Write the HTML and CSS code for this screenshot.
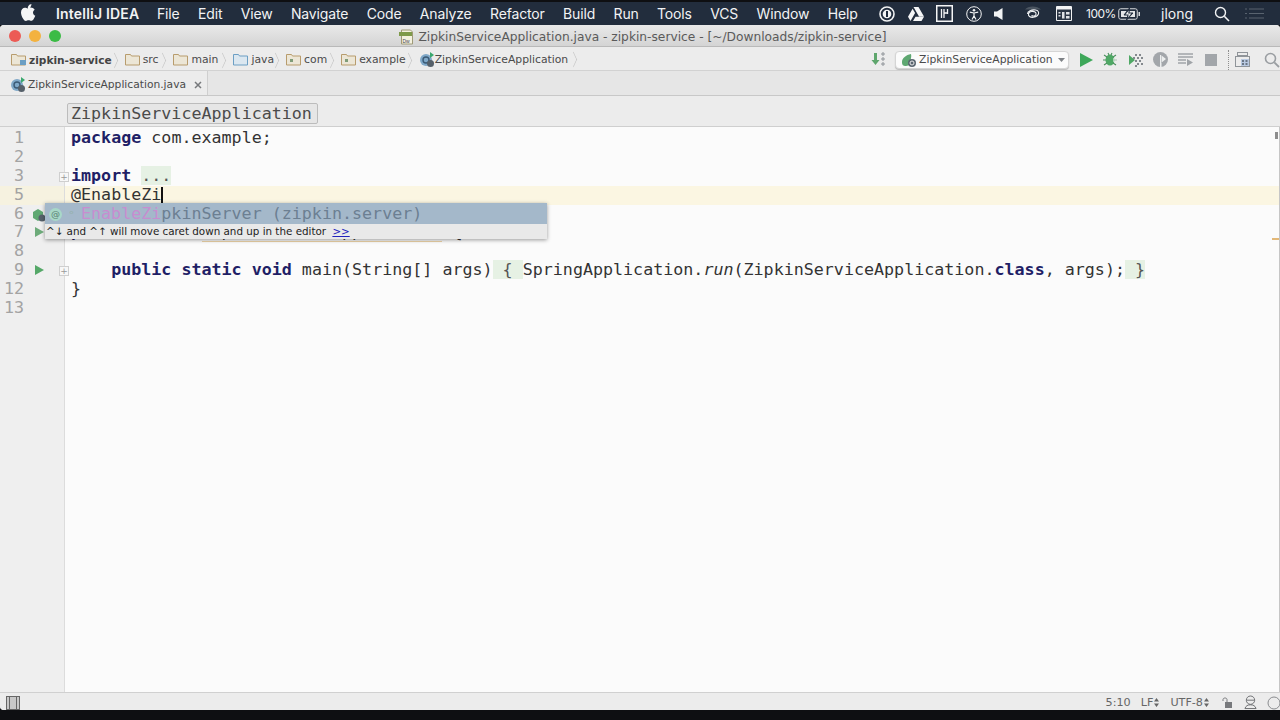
FILE: index.html
```html
<!DOCTYPE html>
<html lang="en">
<head>
<meta charset="utf-8">
<title>IntelliJ IDEA</title>
<link rel="stylesheet" href="styles.css">
</head>
<body>
<div class="desktop">
  <header class="menubar">
    <svg class="apple" width="15" height="17" viewBox="0 0 15 17"><path fill="#f4f5f6" d="M10.400 0c.1 1.100-.3 2.100-.9 2.900-.7.800-1.700 1.400-2.700 1.300-.1-1 .4-2.100 1-2.800C8.400.600 9.500.100 10.400 0zM13.700 5.700c-1 .700-1.700 1.600-1.700 2.900 0 1.500.9 2.600 2.300 3.200-.4 1.100-.9 2.100-1.600 3.100-.7 1-1.400 1.900-2.500 1.900s-1.400-.6-2.600-.6-1.700.6-2.700.7c-1.100 0-1.900-1-2.600-2C.900 12.800 0 10.400 0 8.400c0-3 2-4.700 3.900-4.700 1.100 0 2 .7 2.700.7.700 0 1.800-.8 3-.8 1.700 0 3.100.7 4.100 2.100z"/></svg>
    <strong class="app">IntelliJ IDEA</strong>
    <nav class="menus">
      <span>File</span><span>Edit</span><span>View</span><span>Navigate</span><span>Code</span><span>Analyze</span><span>Refactor</span><span>Build</span><span>Run</span><span>Tools</span><span>VCS</span><span>Window</span><span>Help</span>
    </nav>
    <div class="status-icons">
      <svg class="si m13" width="16" height="16" viewBox="0 0 16 16"><circle cx="8" cy="8" r="7" fill="none" stroke="#f2f3f4" stroke-width="1.600"/><circle cx="8" cy="8" r="4.300" fill="#f2f3f4"/><rect x="7" y="5" width="2" height="6" fill="#1f2b3c"/></svg>
      <svg class="si m12" width="16" height="14" viewBox="0 0 16 14"><path fill="#f4f5f6" d="M5.500 0h5l5.500 9.500h-5zM4.600 1.700 7.100 6 2.500 14 0 9.700zM5 14l2.500-4.300H16L13.500 14z"/></svg>
      <svg class="si m13" width="17" height="17" viewBox="0 0 17 17"><rect x=".75" y=".75" width="15.500" height="15.500" fill="none" stroke="#f4f5f6" stroke-width="1.500"/><path d="M5.500 4v9M8 4v9M11.500 4v5M8 8h3.500" stroke="#f4f5f6" stroke-width="1.300" fill="none"/></svg>
      <svg class="si m12" width="16" height="16" viewBox="0 0 16 16"><circle cx="8" cy="8" r="7.300" fill="none" stroke="#f2f3f4" stroke-width="1"/><circle cx="8" cy="4.300" r="1.300" fill="#f2f3f4"/><path d="M3.800 6.200 8 7l4.200-.8M8 7v3M8 10l-2 3.500M8 10l2 3.500" fill="none" stroke="#f2f3f4" stroke-width="1.200"/></svg>
      <svg class="si m21" width="9" height="12" viewBox="0 0 9 12"><path fill="#f2f3f4" d="M0 3.500h3L8.500 0v12L3 8.500H0z"/></svg>
      <svg class="si m14" width="18" height="16" viewBox="0 0 18 16"><path d="M1 3.500c3-4 12-4 16 0z" fill="#4b5561"/><path d="M3.500 8c0-3 4-4.500 8-4 3.500.5 4 3.500 2 5.500s-6 2.500-8 1-1-4.500 2-5 5 1 4.500 2.800-3 2.200-4.500 1.200" fill="none" stroke="#eef0f2" stroke-width="1.100"/></svg>
      <svg class="si m14" width="16" height="15" viewBox="0 0 16 15"><rect width="16" height="15" rx="1" fill="#f2f3f4"/><rect x="1" y="3.500" width="14" height="10.500" fill="#2a3544"/><path d="M2.500 6h2v1.500h-2zM2.500 9h2v1.500h-2zM6 6h2.500v6.500H6zM10 6h3.500v2.500H10zM10 10h3.500v2.500H10z" fill="#dfe2e5"/></svg>
      <span class="battery-text">100%</span>
      <svg class="si battery" width="23" height="14" viewBox="0 0 23 14"><rect x=".75" y="1.750" width="18.500" height="10.500" rx="2" fill="none" stroke="#d8dbde" stroke-width="1"/><rect x="20.500" y="5" width="1.500" height="4" fill="#d8dbde"/><path d="M3 4h14v6H3z" fill="#e4e6e8"/><path d="M11.500 1 6 8h4l-1.500 5L15 6h-4z" fill="#243041" stroke="#243041"/><path d="M10.800 3.500 7.500 7.500h3.200l-.7 3 3.300-4h-3.200z" fill="#f2f3f4"/></svg>
      <span class="user">jlong</span>
      <svg class="si m15" width="16" height="16" viewBox="0 0 16 16"><circle cx="6.500" cy="6.500" r="5" fill="none" stroke="#f2f3f4" stroke-width="1.400"/><path d="M10.300 10.300 15 15" stroke="#f2f3f4" stroke-width="1.600"/></svg>
      <svg class="si" width="19" height="11" viewBox="0 0 19 11"><path d="M0 1h2M4 1h15M0 5.500h2M4 5.500h15M0 10h2M4 10h15" stroke="#59636f" stroke-width="1"/></svg>
    </div>
  </header>

  <div class="window">
    <div class="titlebar">
      <div class="lights"><i class="red"></i><i class="yellow"></i><i class="green"></i></div>
      <div class="title">
        <svg width="16" height="16" viewBox="0 0 16 16"><path d="M3.500 1h9l2 2v12h-11z" fill="#f4f1df" stroke="#9f9a78"/><rect x="1" y="3" width="13" height="4" fill="#7f9a4a"/><text class="dw" x="4.500" y="13.500">Dw</text></svg>
        <span>ZipkinServiceApplication.java - zipkin-service - [~/Downloads/zipkin-service]</span>
      </div>
    </div>

    <div class="navbar">
      <ol class="crumbs">
        <li class="root"><svg width="15" height="13" viewBox="0 0 15 13"><path d="M.5 1.500h5l1 1.500h8v9H.5z" fill="#ece6d6" stroke="#b89c6d"/><rect x="9" y="7" width="6" height="5" fill="#6c9fc4"/></svg><b>zipkin-service</b></li>
        <li><svg width="15" height="13" viewBox="0 0 15 13"><path d="M.5 1.500h5l1 1.500h8v9H.5z" fill="#ece6d6" stroke="#b89c6d"/></svg>src</li>
        <li><svg width="15" height="13" viewBox="0 0 15 13"><path d="M.5 1.500h5l1 1.500h8v9H.5z" fill="#ece6d6" stroke="#b89c6d"/></svg>main</li>
        <li class="java"><svg width="15" height="13" viewBox="0 0 15 13"><path d="M.5 1.500h5l1 1.500h8v9H.5z" fill="#dbe7f0" stroke="#6c9fc4"/></svg>java</li>
        <li class="com"><svg width="15" height="13" viewBox="0 0 15 13"><path d="M.5 1.500h5l1 1.500h8v9H.5z" fill="#ece6d6" stroke="#b89c6d"/><rect x="4" y="6" width="3" height="3" fill="#7f9c78"/></svg>com</li>
        <li class="example"><svg width="15" height="13" viewBox="0 0 15 13"><path d="M.5 1.500h5l1 1.500h8v9H.5z" fill="#ece6d6" stroke="#b89c6d"/><rect x="4" y="6" width="3" height="3" fill="#7f9c78"/></svg>example</li>
        <li class="last"><svg width="16" height="16" viewBox="0 0 16 16"><circle cx="7" cy="8" r="6" fill="#7fa8c8"/><circle cx="7" cy="8" r="3" fill="none" stroke="#3a5a76" stroke-width="1.400"/><path d="M11 0v6l4-3z" fill="#3aa76d"/><circle cx="11.500" cy="11.500" r="3.500" fill="#56606a"/></svg>ZipkinServiceApplication</li>
      </ol>
      <div class="runbar">
        <svg class="sort" width="16" height="16" viewBox="0 0 16 16"><path d="M3 1h3v7h2.500L4.500 13 .5 8H3z" fill="#5ea66d"/><path d="M11 1h2v2h-2zM11 6h2v2h-2zM11 11h2v2h-2z" fill="none" stroke="#8f9499"/></svg>
        <div class="combo">
          <svg width="16" height="14" viewBox="0 0 16 14"><path d="M1 9c0-4 4-7 9-8 1 3-1 5 0 7s-2 5-5 5-4-1-4-4z" fill="#5fa872"/><circle cx="11" cy="10" r="4" fill="#5b6670"/><circle cx="11" cy="10" r="2" fill="none" stroke="#e8e8e8"/></svg>
          <span>ZipkinServiceApplication</span>
          <svg class="combo-arrow" width="7" height="4" viewBox="0 0 7 4"><path d="M0 0h7L3.500 4z" fill="#7e8286"/></svg>
        </div>
        <svg class="rb ml11" width="13" height="14" viewBox="0 0 13 14"><path d="M0 0 13 7 0 14z" fill="#3ea85a"/></svg>
        <svg class="rb ml10" width="15" height="15" viewBox="0 0 15 15"><ellipse cx="7" cy="8" rx="4.500" ry="5.500" fill="#4fa865"/><path d="M1 3l3 2M13 3l-3 2M0 8h3M14 8h-3M1 13l3-2M13 13l-3-2M5 1l1 2M9 1 8 3" stroke="#4a8f5c" stroke-width="1.100"/><path d="M10 6h4v4h-4z" fill="#ececec" opacity=".6"/></svg>
        <svg class="rb ml10" width="16" height="14" viewBox="0 0 16 14"><path d="M1 2l6 5-6 5z" fill="#4fa865"/><path d="M7 1h2v2H7zM11 1h2v2h-2zM5 4h2v2H5zM9 4h2v2H9zM13 4h2v2h-2zM7 7h2v2H7zM11 7h2v2h-2zM9 10h2v2H9zM13 10h2v2h-2zM7 12h2v2H7z" fill="#84898e"/></svg>
        <svg class="rb ml9" width="15" height="15" viewBox="0 0 15 15"><circle cx="7.500" cy="7.500" r="7.500" fill="#a2a6aa"/><path d="M7 3v12h1.500V3zM8 3l5 4-5 4z" fill="#eceeee"/></svg>
        <svg class="rb ml10" width="15" height="13" viewBox="0 0 15 13"><path d="M0 1h15M0 4h15M0 7h8M0 10h8" stroke="#a0a4a8" stroke-width="1.400"/><path d="M9 6l6 3.500L9 13z" fill="#a0a4a8"/></svg>
        <i class="stop"></i>
        <i class="sep"></i>
        <svg class="rb ml6" width="15" height="15" viewBox="0 0 15 15"><rect x="2.500" y=".5" width="10" height="3" fill="none" stroke="#8f9499"/><rect x=".5" y="4.500" width="14" height="10" fill="none" stroke="#8f9499"/><path d="M6 7h8v7H6z" fill="#b8c8e0"/><path d="M7 8h2v2H7zM10.500 8h2v2h-2zM7 11h2v2H7zM10.500 11h2v2h-2z" fill="#6a7786"/></svg>
        <svg class="rb ml14" width="16" height="16" viewBox="0 0 16 16"><circle cx="6.500" cy="6.500" r="5" fill="none" stroke="#9a9ea2" stroke-width="1.600"/><path d="M10.300 10.300 15 15" stroke="#9a9ea2" stroke-width="1.800"/></svg>
      </div>
    </div>

    <div class="tabbar">
      <div class="tab">
        <svg width="16" height="16" viewBox="0 0 16 16"><circle cx="7" cy="8" r="6" fill="#7fa8c8"/><circle cx="7" cy="8" r="3" fill="none" stroke="#3a5a76" stroke-width="1.400"/><path d="M11 0v6l4-3z" fill="#3aa76d"/><circle cx="11.500" cy="11.500" r="3.500" fill="#56606a"/></svg>
        <span>ZipkinServiceApplication.java</span>
        <svg class="close" width="8" height="8" viewBox="0 0 8 8"><path d="M1 1l6 6M7 1 1 7" stroke="#77797c" stroke-width="1.500"/></svg>
      </div>
    </div>

    <div class="classbar"><span class="classname">ZipkinServiceApplication</span></div>

    <main class="editor">
      <div class="row"><div class="gutter"><span class="num">1</span></div><code><b>package</b> com.example;</code></div>
      <div class="row"><div class="gutter"><span class="num">2</span></div><code></code></div>
      <div class="row"><div class="gutter"><span class="num">3</span><i class="fold">+</i></div><code><b>import</b> <span class="folded">...</span></code></div>
      <div class="row current"><div class="gutter"><span class="num">5</span></div><code>@EnableZi<i class="caret"></i></code></div>
      <div class="row"><div class="gutter"><span class="num">6</span><svg class="bean" width="15" height="14" viewBox="0 0 15 14"><path d="M1 4l5-3 5 3v6l-5 3-5-3z" fill="#5fa872"/><circle cx="10" cy="10" r="3.500" fill="#56606a"/></svg></div><code>@SpringBootApplication</code></div>
      <div class="row"><div class="gutter"><span class="num">7</span><svg class="play" width="9" height="10" viewBox="0 0 9 10"><path d="M0 0l9 5-9 5z" fill="#6dab7a"/></svg></div><code><b>public class</b> <span class="warn">ZipkinServiceApplication</span> {</code></div>
      <div class="row"><div class="gutter"><span class="num">8</span></div><code></code></div>
      <div class="row"><div class="gutter"><span class="num">9</span><svg class="play" width="9" height="10" viewBox="0 0 9 10"><path d="M0 0l9 5-9 5z" fill="#55a868"/></svg><i class="fold">+</i></div><code>    <b>public static void</b> main(String[] args)<span class="folded"> { </span>SpringApplication.<em>run</em>(ZipkinServiceApplication.<b>class</b>, args);<span class="folded"> }</span></code></div>
      <div class="row"><div class="gutter"><span class="num">12</span></div><code>}</code></div>
      <div class="row"><div class="gutter"><span class="num">13</span></div><code></code></div>
      <div class="rest"><div class="gutter"></div></div>

      <div class="popup">
        <div class="item">
          <i class="anno">@</i><i class="lock">ᵒ</i>
          <span class="match">EnableZi</span><span>pkinServer (zipkin.server)</span>
        </div>
        <div class="hint">^↓ and ^↑ will move caret down and up in the editor <a>&gt;&gt;</a></div>
      </div>
      <i class="scroll-thumb"></i>
      <i class="stripe"></i>
    </main>

    <footer class="statusbar">
      <svg width="14" height="14" viewBox="0 0 14 14"><rect x=".5" y=".5" width="13" height="13" fill="#c8c8c8" stroke="#666"/><path d="M3.500 1v12M10.500 1v12" stroke="#666"/></svg>
      <div class="status-right">
        <span class="caretpos">5:10</span>
        <span class="drop">LF<svg width="5" height="9" viewBox="0 0 5 9"><path d="M2.500 0 5 3.500H0zM2.500 9 0 5.500h5z" fill="#666"/></svg></span>
        <span class="drop utf">UTF-8<svg width="5" height="9" viewBox="0 0 5 9"><path d="M2.500 0 5 3.500H0zM2.500 9 0 5.500h5z" fill="#666"/></svg></span>
        <svg class="lockicon" width="11" height="11" viewBox="0 0 11 11"><rect x="3" y="5" width="7" height="6" fill="#77797c"/><path d="M1 4V2.500C1 .5 5 .5 5 2.500V5" fill="none" stroke="#77797c"/></svg>
        <svg class="face" width="13" height="15" viewBox="0 0 14 15"><circle cx="7" cy="5" r="4.500" fill="none" stroke="#66686b"/><path d="M3 5h8M1 14c1-3 3-4 6-4s5 1 6 4z" fill="none" stroke="#66686b"/></svg>
        <svg width="14" height="14" viewBox="0 0 14 14"><circle cx="7" cy="7" r="6" fill="none" stroke="#8a8c8f"/></svg>
      </div>
    </footer>
  </div>
</div>
</body>
</html>
```
FILE: styles.css
```css
* { box-sizing: border-box; }
html, body { margin: 0; height: 100%; background: #111; overflow: hidden; }
svg { display: block; flex: none; }
.desktop { width: 1280px; height: 720px; padding: 2px 0 10px; display: flex; flex-direction: column; background: #0e0f12; }

.menubar { height: 23px; flex: none; background: #222d3d; color: #f2f3f4; display: flex; align-items: center; padding-left: 21px; font: 14px/23px Inter, "Liberation Sans", sans-serif; }
.apple { margin-right: 20px; margin-top: -2px; }
.app { font-weight: 600; width: 101px; letter-spacing: .2px; }
.menus { display: flex; gap: 18.400px; font-weight: 400; letter-spacing: -.15px; }
.status-icons { margin-left: auto; display: flex; align-items: center; padding-right: 16px; }
.m12 { margin-right: 12px; }
.m13 { margin-right: 13px; }
.m14 { margin-right: 14px; }
.m15 { margin-right: 15px; }
.m21 { margin-right: 21px; }
.battery-text { font-size: 12px; letter-spacing: -.5px; width: 29px; }
.battery { margin: 0 20px 0 3px; }
.user { margin-right: 21px; font-size: 14px; width: 32px; }

.window { flex: 1; display: flex; flex-direction: column; min-height: 0; background: #ececec; border-radius: 4px 4px 0 4px; overflow: hidden; }
.titlebar { height: 22px; flex: none; position: relative; padding-top: 2px; background: linear-gradient(#e9e9e9, #d4d4d4); border-bottom: 1px solid #b9b9b9; display: flex; align-items: center; justify-content: center; }
.lights { position: absolute; left: 9px; top: 5px; display: flex; gap: 8px; }
.lights i { width: 12px; height: 12px; border-radius: 50%; }
.red { background: #ec5b55; }
.yellow { background: #f3b23f; }
.green { background: #3bbb45; }
.title { display: flex; align-items: center; gap: 4px; font: 12.230px "DejaVu Sans", sans-serif; color: #5a5a5a; margin-left: 5px; }
.dw { font: 5px "Liberation Sans", sans-serif; fill: #445; }

.navbar { height: 24px; flex: none; display: flex; align-items: center; background: #ececec; border-bottom: 1px solid #d2d2d2; padding: 2px 0 0 11px; font: 10.800px "DejaVu Sans", sans-serif; color: #4a4a4a; }
.crumbs { list-style: none; margin: 0; padding: 0; display: flex; align-items: center; }
.crumbs li { display: flex; align-items: center; gap: 3px; position: relative; padding-right: 15px; }
.crumbs li::after { content: ""; position: absolute; right: 5px; top: 2px; width: 10px; height: 10px; border: solid #c3c3c3; border-width: 1px 1px 0 0; transform: scaleX(.45) rotate(45deg); }
.crumbs .root { padding-right: 13px; }
.crumbs .java { padding-right: 12px; }
.crumbs .com { padding-right: 14px; }
.crumbs .example { padding-right: 13px; }
.crumbs .last { padding-right: 0; gap: 0; }
.crumbs .last::after { right: -11px; }
.crumbs b { font-weight: 700; color: #444; font-size: 10.600px; }
.runbar { margin-left: auto; display: flex; align-items: center; }
.ml6 { margin-left: 6px; }
.ml9 { margin-left: 9px; }
.ml10 { margin-left: 10px; }
.ml11 { margin-left: 11px; }
.ml14 { margin-left: 14px; }
.sort { margin-right: 8px; }
.combo { width: 174px; height: 18px; border-radius: 4px; background: #fbfbfb; border: 1px solid #d5d5d5; box-shadow: 0 1px 1px #bbb; display: flex; align-items: center; gap: 2px; padding-left: 5px; }
.combo-arrow { margin-left: 3px; }
.stop { width: 12px; height: 12px; margin-left: 12px; background: #a2a6aa; }
.sep { width: 0; height: 20px; margin-left: 11px; border-left: 1px dotted #8e8e8e; }

.tabbar { height: 25px; flex: none; background: #e6e6e6; border-bottom: 1px solid #c8c8c8; }
.tab { width: 208px; height: 24px; padding: 3px 0 0 10px; background: #ececec; border-right: 1px solid #cfcfcf; display: flex; align-items: center; gap: 2px; font: 10.700px "DejaVu Sans", sans-serif; color: #4a4a4a; }
.close { margin-left: 6px; }

.classbar { height: 31px; flex: none; background: #ececec; border-bottom: 1px solid #cfcfcf; padding: 7px 0 0 67px; }
.classname { display: block; width: 251px; height: 21px; padding-left: 3px; border: 1px solid #bcbcbc; border-radius: 2px; background: #e6e6e6; font: 16.680px/19px "DejaVu Sans Mono", monospace; color: #4b4b4b; }

.editor { flex: 1; min-height: 0; position: relative; background: #fbfbfb; display: flex; flex-direction: column; border-right: 1px solid #c6c6c6; font: 16.680px/18.900px "DejaVu Sans Mono", monospace; color: #333; }
.row { height: 18.900px; flex: none; display: flex; }
.row:first-child { height: 20.900px; }
.row:first-child .gutter, .row:first-child code { padding-top: 2px; }
.row code { font: inherit; white-space: pre; padding-left: 6px; }
.row b { color: #1f1f66; font-weight: 700; }
.row em { font-style: italic; }
.gutter { width: 65px; flex: none; position: relative; background: #efefef; border-right: 1px solid #dcdcdc; color: #a3a3a3; }
.num { display: block; width: 24px; text-align: right; }
.current { background: #fbf6e2; }
.current .gutter { background: #f6f2e0; }
.fold { position: absolute; left: 59px; top: 5px; width: 10px; height: 10px; border: 1px solid #cfcfcf; background: #f7f7f7; color: #9a9a9a; font: 9px/8px "DejaVu Sans", sans-serif; text-align: center; }
.bean { position: absolute; left: 32px; top: 3px; }
.play { position: absolute; left: 35px; top: 4px; }
.folded { background: #e6f1e4; color: #555; }
.caret { display: inline-block; width: 2px; height: 18px; background: #111; vertical-align: top; margin-top: 1px; }
.warn { border-bottom: 1px solid #eed4a8; }
.rest { flex: 1; display: flex; min-height: 0; }
.popup { position: absolute; left: 45px; top: 76px; width: 502px; height: 36px; box-shadow: 0 1px 4px rgba(0,0,0,.4); }
.item { height: 21px; padding-top: 2px; background: #a4b8ca; color: #6c7f92; display: flex; align-items: center; white-space: pre; }
.match { color: #c78dd0; }
.anno { width: 13px; height: 13px; margin-left: 4px; border-radius: 50%; background: #a8d8c8; color: #5a7f73; font: 9px/13px "DejaVu Sans", sans-serif; text-align: center; }
.lock { width: 19px; color: #92b0a8; font: 11px/13px "DejaVu Sans", sans-serif; text-align: center; }
.hint { height: 15px; background: #e9e9e9; color: #222; font: 10.350px/15px "DejaVu Sans", sans-serif; padding-left: 1px; white-space: pre; }
.hint a { color: #2222bb; text-decoration: underline; margin-left: 3px; }
.scroll-thumb { position: absolute; right: 1px; top: 5px; width: 3px; height: 7px; background: #8d8d8d; }
.stripe { position: absolute; right: 0; top: 111px; width: 7px; height: 2px; background: #e3b877; }

.statusbar { height: 18px; flex: none; background: #ececec; border-top: 1px solid #d0d0d0; display: flex; align-items: center; padding: 2px 0 0 6px; font: 11.200px "DejaVu Sans", sans-serif; color: #666; }
.status-right { margin-left: auto; display: flex; align-items: center; margin-right: -1px; }
.caretpos { margin-right: 10px; }
.drop { display: flex; align-items: center; gap: 1px; margin-right: 11px; }
.utf { margin-right: 13px; }
.lockicon { margin-right: 11px; }
.face { margin-right: 10px; }
```
